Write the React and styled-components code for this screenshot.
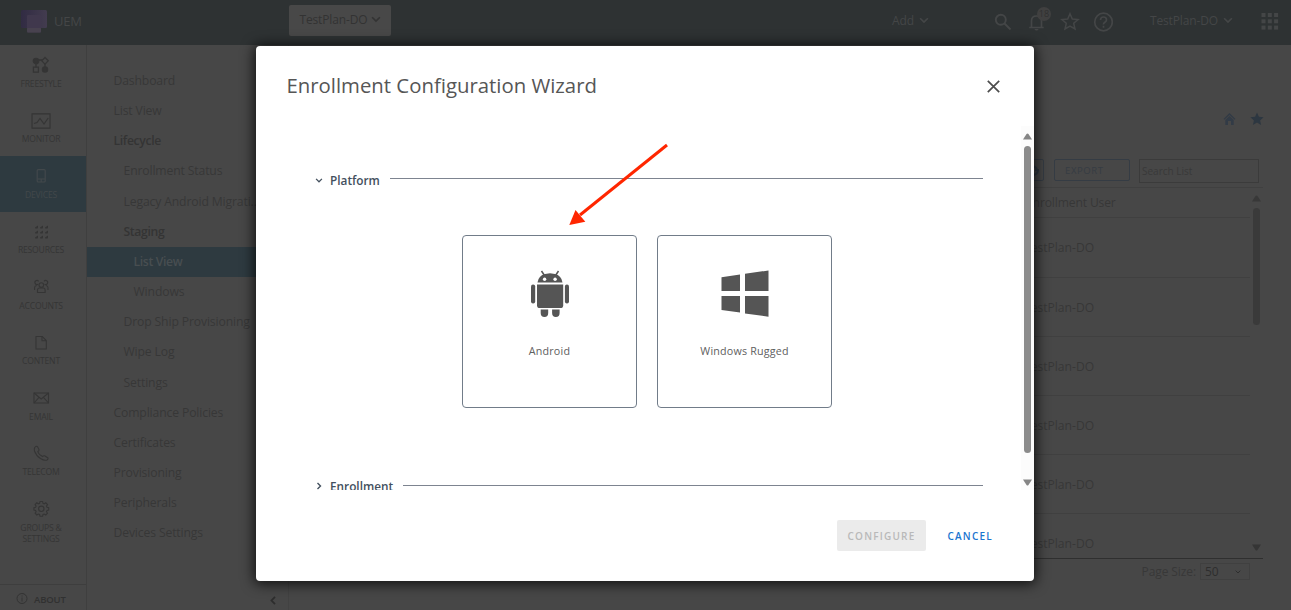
import React from "react";
import styled, { createGlobalStyle, css } from "styled-components";

const Global = createGlobalStyle`
  * { box-sizing: border-box; }
  body { margin: 0; background: #474747; font-family: "Open Sans", "Noto Sans", sans-serif; overflow: hidden; }
`;

const Page = styled.div`
  position: relative;
  width: 1291px;
  height: 610px;
  overflow: hidden;
  display: flex;
  flex-direction: column;
  background: #474747;
  color: #383838;
`;

const Header = styled.header`
  height: 45px;
  flex: none;
  display: flex;
  align-items: center;
  background: #2e3233;
  color: #444647;
  padding-left: 21px;
  padding-bottom: 4px;
`;
const Brand = styled.div`
  display: flex;
  align-items: center;
  gap: 6px;
  width: 267.5px;
  font-size: 13px;
  letter-spacing: -0.2px;
`;
const OrgButton = styled.div`
  display: flex;
  align-items: center;
  gap: 4px;
  width: 102px;
  height: 31px;
  padding: 0 9px 2px 11px;
  border-radius: 2px;
  background: #484848;
  color: #333;
  font-size: 12px;
  letter-spacing: -0.15px;
  white-space: nowrap;
`;
const MenuLabel = styled.div`
  display: flex;
  align-items: center;
  gap: 5px;
  margin-left: ${(p) => p.$left}px;
  width: ${(p) => p.$width}px;
  font-size: 12px;
  letter-spacing: -0.15px;
  white-space: nowrap;
`;
const HeaderIcons = styled.div`
  display: flex;
  align-items: center;
  gap: 13px;
  margin-left: 56px;
  padding-top: 2px;
`;
const BellWrap = styled.div`
  position: relative;
  display: flex;
`;
const Badge = styled.span`
  position: absolute;
  left: 12px;
  top: -5px;
  width: 14px;
  height: 14px;
  border-radius: 50%;
  background: #404040;
  color: #303030;
  font-size: 9px;
  line-height: 13px;
  text-align: center;
`;

const Main = styled.div`
  flex: 1;
  display: flex;
  min-height: 0;
`;
const Rail = styled.nav`
  width: 87px;
  flex: none;
  display: flex;
  flex-direction: column;
  border-right: 1px solid #3f3f3f;
`;
const RailItem = styled.div`
  height: ${(p) => (p.$tall ? 66 : 55.5)}px;
  display: flex;
  flex-direction: column;
  align-items: center;
  padding: 10px 4px 0 0;
  gap: 3.5px;
  font-size: 8.6px;
  line-height: 11px;
  letter-spacing: -0.2px;
  text-align: center;
  color: #353535;
  svg { flex: none; }
  ${(p) => p.$active && css`
    background: #2e3a40;
    color: #42484b;
  `}
`;
const RailLabel = styled.span`
  white-space: pre;
`;
const About = styled.div`
  margin-top: auto;
  height: 26px;
  border-top: 1px solid #3e3e3e;
  display: flex;
  align-items: center;
  gap: 6px;
  padding: 3px 0 0 16px;
  font-size: 9.5px;
  font-weight: 600;
  letter-spacing: -0.15px;
  color: #313131;
`;
const SubNav = styled.nav`
  width: 202px;
  flex: none;
  display: flex;
  flex-direction: column;
  padding-top: 21px;
  border-right: 1px solid #424242;
`;
const SubItem = styled.div`
  height: 30.17px;
  line-height: 30px;
  flex: none;
  padding-left: ${(p) => 26.5 + p.$level * 10}px;
  font-size: 12.2px;
  font-weight: ${(p) => (p.$bold ? 600 : 400)};
  letter-spacing: ${(p) => (p.$bold ? -0.35 : -0.14)}px;
  white-space: nowrap;
  color: ${(p) => (p.$bold ? "#343434" : "#373737")};
  ${(p) => p.$active && css`
    background: #2e3a40;
    color: #484e51;
  `}
`;
const Collapse = styled.div`
  margin-top: auto;
  padding: 0 12px 5px 0;
  display: flex;
  justify-content: flex-end;
`;

const Content = styled.main`
  flex: 1;
  display: flex;
  flex-direction: column;
  padding-right: 28px;
`;
const PageIcons = styled.div`
  display: flex;
  justify-content: flex-end;
  gap: 14px;
  margin: 67px -1px 0 0;
  color: #323b46;
`;
const Toolbar = styled.div`
  display: flex;
  justify-content: flex-end;
  align-items: flex-start;
  margin-top: 33px;
  height: 29px;
  padding-right: 4px;
  border-bottom: 1px solid #404040;
`;
const ToolButton = styled.div`
  width: ${(p) => p.$width}px;
  height: 22px;
  margin-right: ${(p) => p.$gap}px;
  padding-left: ${(p) => p.$pad}px;
  display: flex;
  align-items: center;
  border: 1px solid #353c44;
  border-radius: 2px;
  color: #363c43;
  font-size: 9.5px;
  letter-spacing: 0.6px;
`;
const Search = styled.div`
  width: 120px;
  height: 24px;
  border: 1px solid #3b3b3b;
  padding-left: 2px;
  line-height: 23px;
  font-size: 10px;
  color: #393939;
`;
const Table = styled.div`
  height: 371px;
  flex: none;
  display: flex;
  border-bottom: 1px solid #2f2f2f;
`;
const Rows = styled.div`
  flex: 1;
  overflow: hidden;
  padding-left: 80px;
`;
const Row = styled.div`
  height: ${(p) => p.$h}px;
  line-height: ${(p) => p.$lh}px;
  border-bottom: ${(p) => (p.$last ? 0 : 1)}px solid #404040;
  padding-left: ${(p) => p.$left}px;
  font-size: 12.1px;
  letter-spacing: ${(p) => p.$track || 0}px;
  color: #373737;
`;
const Bar = styled.div`
  flex: none;
  width: 13px;
  display: flex;
  flex-direction: column;
  align-items: center;
`;
const Thumb = styled.div`
  width: 7px;
  height: ${(p) => p.$h}px;
  flex: none;
  border-radius: 4px;
  background: ${(p) => p.$color};
`;
const Pager = styled.div`
  display: flex;
  justify-content: flex-end;
  align-items: center;
  gap: 4px;
  padding: 4px 13px 0 0;
  font-size: 12px;
  letter-spacing: -0.1px;
`;
const PageSize = styled.div`
  width: 50px;
  height: 17px;
  border: 1px solid #404040;
  display: flex;
  align-items: center;
  justify-content: space-between;
  padding: 0 8px 0 4px;
  color: #2e2e2e;
`;
const Spacer = styled.div`
  height: ${(p) => p.$h}px;
  flex: none;
`;

const Modal = styled.section`
  position: absolute;
  left: 256px;
  top: 45.5px;
  width: 778px;
  height: 535.5px;
  border-radius: 4px;
  background: #fff;
  box-shadow: 0 1px 13px 2px rgba(0, 0, 0, 0.75);
  display: flex;
  flex-direction: column;
`;
const ModalHeader = styled.div`
  height: 80.5px;
  flex: none;
  display: flex;
  justify-content: space-between;
  align-items: center;
  padding: 1px 34.5px 0 30.5px;
`;
const Title = styled.h1`
  margin: 0;
  padding-bottom: 2px;
  font-size: 20.35px;
  font-weight: 400;
  color: #565656;
`;
const ModalBody = styled.div`
  height: 364px;
  flex: none;
  display: flex;
  overflow: hidden;
`;
const Scroll = styled.div`
  width: 765px;
  padding: 45px 38px 0 59px;
  flex: none;
`;
const ModalBar = styled.div`
  width: 13px;
  background: #fcfcfc;
  display: flex;
  flex-direction: column;
  align-items: center;
  padding-top: 7px;
`;
const Section = styled.div`
  display: flex;
  align-items: center;
  height: 18px;
  font-size: 11.8px;
  font-weight: 600;
  color: #43505e;
`;
const SectionName = styled.span`
  margin: ${(p) => p.$shift || 0}px 10px 0 7px;
`;
const Rule = styled.div`
  flex: 1;
  height: 1px;
  margin-top: ${(p) => p.$shift}px;
  background: #7d8490;
`;
const Cards = styled.div`
  display: flex;
  gap: 20px;
  margin: 46px 0 69px 147px;
`;
const Card = styled.div`
  width: 175px;
  height: 173px;
  border: 1px solid #717c89;
  border-radius: 4px;
  display: flex;
  flex-direction: column;
  align-items: center;
  padding-top: 34px;
  font-size: 10.7px;
  letter-spacing: 0.2px;
  color: #606060;
`;
const CardName = styled.span`
  margin-top: 26px;
  line-height: 15px;
`;
const Footer = styled.div`
  display: flex;
  align-items: center;
  margin-top: 30px;
  padding-left: 581px;
  font-size: 10px;
  font-weight: 600;
  letter-spacing: 1.2px;
  line-height: 30px;
`;
const Configure = styled.button`
  all: unset;
  width: 89px;
  height: 31px;
  text-align: center;
  border-radius: 2px;
  background: #ebebeb;
  color: #b9b9b9;
`;
const Cancel = styled.button`
  all: unset;
  margin-left: 21.5px;
  color: #1a75cf;
`;
const Arrow = styled.svg`
  position: absolute;
  left: 560px;
  top: 135px;
`;

const Chevron = ({ w = 10, h = 7, sw = 1.5 }) => (
  <svg width={w} height={h} viewBox="0 0 9 6" fill="none" stroke="currentColor" strokeWidth={sw}>
    <path d="M1 1l3.5 3.5L8 1" />
  </svg>
);
const Tri = ({ down, color }) => (
  <svg width="9" height="7" viewBox="0 0 9 7" fill={color}>
    <path d={down ? "M0 .5h9L5.5 6q-1 1.200-2 0z" : "M0 6.500h9L5.500 1q-1-1.200-2 0z"} />
  </svg>
);

const railIcons = {
  freestyle: (
    <g fill="none" stroke="currentColor" strokeWidth="1.3">
      <path d="M5 5v11M5 5h7M14 8v7" />
      <circle cx="5" cy="6" r="2.7" fill="currentColor" />
      <circle cx="14" cy="14.5" r="2.6" fill="currentColor" />
      <path d="M14 2.5L17.3 5.8 14 9.1 10.7 5.8z" fill="#474747" />
      <path d="M2.4 12.2h5v5h-5z" fill="#474747" />
    </g>
  ),
  monitor: (
    <g fill="none" stroke="currentColor" strokeWidth="1.2">
      <path d="M1 2.8h18v14.4H1z" />
      <path d="M3 12.5l3-1 3-4 4 5.5 4.2-6" />
    </g>
  ),
  devices: (
    <g fill="none" stroke="currentColor" strokeWidth="1.2">
      <rect x="6.2" y="3.6" width="8" height="12.4" rx="1" />
      <path d="M6.2 13h8M10.2 13v3" />
    </g>
  ),
  resources: (
    <g fill="currentColor">
      {[3.5, 8.5, 13.5].map((y) => [4, 9, 14].map((x) => <path key={x + "-" + y} d={`M${x} ${y + 2}l3-2v2.5l-.8.5h-2z`} />))}
    </g>
  ),
  accounts: (
    <g fill="none" stroke="currentColor" strokeWidth="1.1">
      <circle cx="10.3" cy="8" r="2.3" />
      <path d="M6.5 15.5v-2.500q0-2 2-2h3.600q2 0 2 2v2.500z" />
      <path d="M7 7.2a2 2 0 1 1 .6-2.8M13.6 7.2a2 2 0 1 0-.6-2.8M3.600 13V10.500q0-1.500 2-2M17 13V10.500q0-1.500-2-2" />
    </g>
  ),
  content: (
    <g fill="none" stroke="currentColor" strokeWidth="1.1">
      <path d="M5 3.500h6.300l4 4v8.500H5z" />
      <path d="M11 3.500v4.200h4" />
    </g>
  ),
  email: (
    <g fill="none" stroke="currentColor" strokeWidth="1.1">
      <path d="M3 5h14.500v10H3z" />
      <path d="M3 5l7.200 6 7.300-6M3 15l5-5.600M17.500 15l-5-5.600" />
    </g>
  ),
  telecom: (
    <path
      d="M3.7 3.500Q5.500 1.200 6.700 3L8 5.600Q8.300 6.700 6.800 7.500 7.500 10.500 11.500 12.500 13 11.200 14 12L17 14Q17.500 15 16 16 13.500 17 9.500 14.500 5 11.500 3.500 7 3 5 3.700 3.500z"
      fill="none" stroke="currentColor" strokeWidth="1.1"
    />
  ),
  groups: (
    <g fill="none" stroke="currentColor" strokeWidth="1.1" transform="translate(0 -1)">
      <circle cx="10.3" cy="10.8" r="2.7" />
      <path d="M9 3.5h2.6l.4 1.800 1.200.5 1.600-1 1.700 1.800-1 1.500.5 1.200 1.700.4v2.400l-1.700.4-.5 1.200 1 1.500-1.700 1.800-1.600-1-1.200.5-.4 1.700H9l-.4-1.700-1.200-.5-1.600 1-1.700-1.800 1-1.500-.5-1.200-1.700-.4V9.700l1.700-.4.500-1.200-1-1.500 1.700-1.800 1.600 1 1.200-.5z" />
    </g>
  ),
};

const rail = [
  ["freestyle", "FREESTYLE"],
  ["monitor", "MONITOR"],
  ["devices", "DEVICES"],
  ["resources", "RESOURCES"],
  ["accounts", "ACCOUNTS"],
  ["content", "CONTENT"],
  ["email", "EMAIL"],
  ["telecom", "TELECOM"],
  ["groups", "GROUPS &\nSETTINGS"],
];

const sub = [
  { t: "Dashboard", l: 0 },
  { t: "List View", l: 0 },
  { t: "Lifecycle", l: 0, b: true },
  { t: "Enrollment Status", l: 1 },
  { t: "Legacy Android Migrati...", l: 1 },
  { t: "Staging", l: 1, b: true },
  { t: "List View", l: 2, b: true, a: true },
  { t: "Windows", l: 2 },
  { t: "Drop Ship Provisioning", l: 1 },
  { t: "Wipe Log", l: 1 },
  { t: "Settings", l: 1 },
  { t: "Compliance Policies", l: 0 },
  { t: "Certificates", l: 0 },
  { t: "Provisioning", l: 0 },
  { t: "Peripherals", l: 0 },
  { t: "Devices Settings", l: 0 },
];

export default function App() {
  return (
    <Page>
      <Global />
      <Header>
        <Brand>
          <svg width="27" height="24" viewBox="0 0 27 24">
            <defs>
              <linearGradient id="brand" x1="0" y1="0" x2="1" y2="0">
                <stop offset="0" stopColor="#312b43" />
                <stop offset="1" stopColor="#433c4f" />
              </linearGradient>
            </defs>
            <rect x="0" y="1" width="26" height="18" rx="1.5" fill="url(#brand)" />
            <rect x="6" y="6" width="14" height="17.5" rx="1" fill="#40384d" />
            <rect x="6" y="19" width="14" height="4.5" rx="1" fill="#48424f" />
          </svg>
          UEM
        </Brand>
        <OrgButton>TestPlan-DO <Chevron /></OrgButton>
        <MenuLabel $left={501.5} $width={46}>Add <Chevron /></MenuLabel>
        <HeaderIcons>
          <svg width="18" height="18" viewBox="0 0 18 18" fill="none" stroke="currentColor" strokeWidth="1.9">
            <circle cx="6.8" cy="6.8" r="5" /><path d="M10.5 10.5l6 6" />
          </svg>
          <BellWrap>
            <svg width="22" height="20" viewBox="0 0 22 20" fill="none" stroke="currentColor" strokeWidth="1.7">
              <path d="M4.200 15.500h14.500M6.500 15V9q0-5 5-5t5 5v6" />
              <path d="M9.300 17h4.400q-2 3-4.400 0z" fill="currentColor" stroke="none" />
            </svg>
            <Badge>18</Badge>
          </BellWrap>
          <svg width="20" height="20" viewBox="0 0 20 20" fill="none" stroke="currentColor" strokeWidth="1.5">
            <path d="M10 1.700l2.300 5.300 5.800.5-4.400 3.800 1.300 5.700-5-3-5 3 1.300-5.700L1.900 7.500l5.800-.5z" />
          </svg>
          <svg width="20" height="20" viewBox="0 0 20 20" fill="none" stroke="currentColor" strokeWidth="1.7">
            <circle cx="10.5" cy="10" r="8.8" />
            <path d="M7.500 8q0-3 3-3t3 2.700q0 1.400-1.600 2.500T10.500 12.500M10.500 13.700v2" />
          </svg>
        </HeaderIcons>
        <MenuLabel $left={37} $width={111}>TestPlan-DO <Chevron /></MenuLabel>
        <svg width="18" height="18" viewBox="0 0 18 18" fill="currentColor">
          {[1, 7.3, 13.6].map((y) => [0.5, 6.8, 13.1].map((x) => <rect key={x + "-" + y} x={x} y={y} width="4" height="4" />))}
        </svg>
      </Header>
      <Main>
        <Rail>
          {rail.map(([k, label]) => (
            <RailItem key={k} $active={k === "devices"} $tall={k === "groups"}>
              <svg width="20" height="20" viewBox="0 0 20 20">{railIcons[k]}</svg>
              <RailLabel>{label}</RailLabel>
            </RailItem>
          ))}
          <About>
            <svg width="12" height="12" viewBox="0 0 12 12" fill="none" stroke="currentColor" strokeWidth="0.9">
              <circle cx="6" cy="5.500" r="5" /><path d="M6 2.500v1M6 4.500v4" />
            </svg>
            ABOUT
          </About>
        </Rail>
        <SubNav>
          {sub.map((s, i) => (
            <SubItem key={i} $level={s.l} $bold={s.b} $active={s.a}>{s.t}</SubItem>
          ))}
          <Collapse>
            <svg width="6" height="9" viewBox="0 0 6 9" fill="none" stroke="#2d2d2d" strokeWidth="1.8"><path d="M5 .8L1.5 4.5 5 8.2" /></svg>
          </Collapse>
        </SubNav>
        <Content>
          <PageIcons>
            <svg width="13" height="13" viewBox="0 0 13 13" fill="currentColor">
              <path d="M6.5 1L12.5 7l-.9.8L6.5 3 1.4 7.800.5 7z" /><path d="M2.300 8l4.200-4 4.200 4v5H8V9H5v4H2.300z" />
            </svg>
            <svg width="14" height="14" viewBox="0 0 14 14" fill="#2d3741">
              <path d="M7 .5l1.9 4.300 4.700.5-3.500 3.100 1 4.600L7 10.600 2.900 13l1-4.600L.4 5.300l4.700-.5z" />
            </svg>
          </PageIcons>
          <Toolbar>
            <ToolButton $width={27} $pad={12} $gap={10}>
              <svg width="10" height="12" viewBox="0 0 10 12" fill="none" stroke="#2f3841" strokeWidth="2"><path d="M1 2q4 0 6 3M8 7q-1 4-6 4M5 6h4" /></svg>
            </ToolButton>
            <ToolButton $width={76} $pad={10} $gap={9}>EXPORT</ToolButton>
            <Search>Search List</Search>
          </Toolbar>
          <Table>
            <Rows>
              <Row $h={30} $lh={30} $left={657} $track={-0.13}>Enrollment User</Row>
              {[60, 59, 59, 59, 59].map((h, i) => <Row key={i} $h={h} $lh={59} $left={655}>TestPlan-DO</Row>)}
              <Row $last $h={44} $lh={59} $left={655}>TestPlan-DO</Row>
            </Rows>
            <Bar>
              <Spacer $h={7} />
              <Tri color="#383838" />
              <Spacer $h={6} />
              <Thumb $h={117} $color="#3a3a3a" />
              <Spacer $h={219} />
              <Tri down color="#353535" />
            </Bar>
          </Table>
          <Pager>Page Size: <PageSize>50 <Chevron w={6} h={4} /></PageSize></Pager>
        </Content>
      </Main>

      <Modal>
        <ModalHeader>
          <Title>Enrollment Configuration Wizard</Title>
          <svg width="13" height="13" viewBox="0 0 13 13" stroke="#4d4d4d" strokeWidth="1.7"><path d="M.8.8l11.4 11.4M12.2.8L.8 12.2" /></svg>
        </ModalHeader>
        <ModalBody>
          <Scroll>
            <Section>
              <Chevron w={8} h={5} />
              <SectionName $shift={-1}>Platform</SectionName>
              <Rule $shift={-3} />
            </Section>
            <Cards>
              <Card>
                <svg width="38" height="48" viewBox="0 0 38 48" fill="#555">
                  <path d="M6.5 12.5Q7.5 5.500 14 4L19 3.300 24 4q6.500 1.500 7.500 8.500z" />
                  <path d="M10.5 1l3 4.5M27.5 1l-3 4.500" stroke="#555" strokeWidth="1.5" />
                  <circle cx="13.6" cy="9.3" r="1.7" fill="#fff" /><circle cx="24.1" cy="9.3" r="1.7" fill="#fff" />
                  <path d="M6 14.600h26.200v20.600q0 2.900-2.900 2.900H8.900Q6 38.100 6 35.200z" />
                  <rect x="0" y="14.6" width="4.2" height="19" rx="2" /><rect x="33.9" y="14.6" width="4.1" height="19" rx="2" />
                  <path d="M9.700 39.500h7.500v3.500q0 4-3.750 4t-3.750-4zM21.100 39.500h7.500v3.500q0 4-3.750 4t-3.750-4z" />
                </svg>
                <CardName>Android</CardName>
              </Card>
              <Card>
                <svg width="48" height="48" viewBox="0 0 48 48" fill="#555">
                  <path d="M.5 7.200L19 4.400V21H.5zM24 3.700L47.500.5V21H24zM.5 26H19v16.400L.5 39.900zM24 26h23.500v20.700L24 43.400z" />
                </svg>
                <CardName>Windows Rugged</CardName>
              </Card>
            </Cards>
            <Section>
              <svg width="8" height="8" viewBox="0 0 8 8" fill="none" stroke="currentColor" strokeWidth="1.4"><path d="M2.5 1l3 3-3 3" /></svg>
              <SectionName>Enrollment</SectionName>
              <Rule $shift={-1} />
            </Section>
          </Scroll>
          <ModalBar>
            <Tri color="#858585" />
            <Spacer $h={5.5} />
            <Thumb $h={307} $color="#8b8b8b" />
            <Spacer $h={26.5} />
            <Tri down color="#858585" />
          </ModalBar>
        </ModalBody>
        <Footer>
          <Configure>CONFIGURE</Configure>
          <Cancel>CANCEL</Cancel>
        </Footer>
      </Modal>
      <Arrow width="120" height="100" viewBox="0 0 120 100">
        <path d="M107 10L20 80" stroke="#ff2600" strokeWidth="3" />
        <path d="M9.3 90L15.5 75 25.3 86.8z" fill="#ff2600" />
      </Arrow>
    </Page>
  );
}
